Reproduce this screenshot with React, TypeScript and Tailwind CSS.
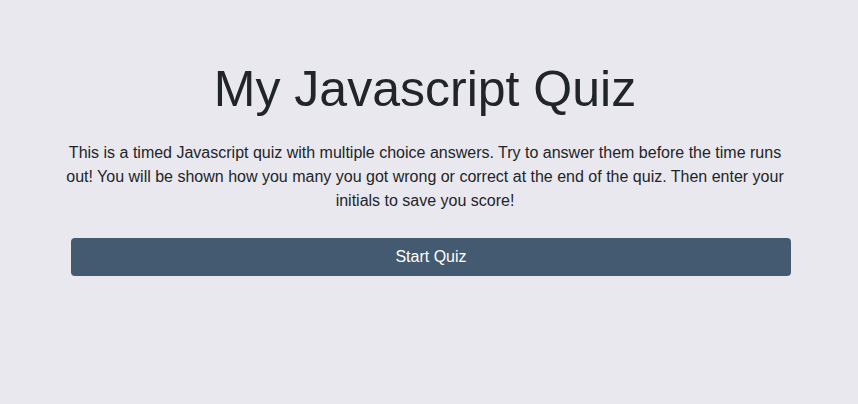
export default function App() {
  return (
    <div
      className="min-h-[404px] w-full bg-[#e9e8ee] text-[#212529]"
      style={{ fontFamily: '"Liberation Sans", Arial, sans-serif' }}
    >
      <div className="mx-auto flex w-[720px] flex-col items-center pt-[59px] translate-x-[2px]">
        <h1 className="text-[50px] leading-[60px] font-normal text-center -translate-x-[6px]">
          My Javascript Quiz
        </h1>
        <p className="mt-[22px] text-center text-[16px] leading-[24px] -translate-x-[6px]">
          This is a timed Javascript quiz with multiple choice answers. Try to answer them before the time runs
          out! You will be shown how you many you got wrong or correct at the end of the quiz. Then enter your
          initials to save you score!
        </p>
        <button className="mt-[25px] h-[38px] w-full rounded-[4px] bg-[#435a70] text-[16px] text-white">
          Start Quiz
        </button>
      </div>
    </div>
  );
}
